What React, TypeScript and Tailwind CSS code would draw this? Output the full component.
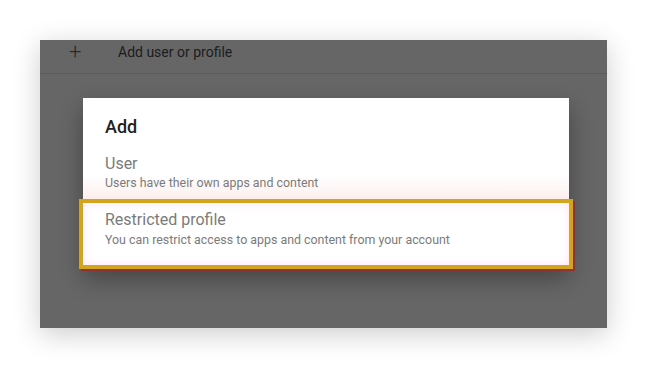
/* Android TV style "Add user or profile" dialog, highlighted option */

const font = "font-['Roboto','Liberation_Sans',sans-serif]";

export default function App() {
  return (
    <div className={`w-[646px] h-[368px] bg-white pt-[40px] pl-[40px] ${font}`}>
      {/* ── dimmed settings panel ── */}
      <div className="w-[567px] h-[288px] bg-[#666666] shadow-[0_6px_26px_rgba(0,0,0,0.2)] flex flex-col">
        <div className="h-[34px] flex items-start pt-[2px] border-b border-[#5b5b5b]">
          <span className="w-[78px] pl-[29px] text-[22px] leading-[20px] font-light text-[#2a2a2a]">+</span>
          <span className="text-[14px] leading-[20px] text-[#1c1c1c]">Add user or profile</span>
        </div>

        {/* ── dialog ── */}
        <div className="ml-[43px] mt-[24px] w-[486px] bg-white pt-[16px] shadow-[0_10px_22px_rgba(0,0,0,0.32)]">
          <div className="px-[22px] text-[18px] leading-[26px] font-medium text-[#1f1f1f]">Add</div>

          <div className="px-[22px] pt-[14px] pb-[8px] bg-gradient-to-b from-white from-60% to-[#fdeeee]">
            <div className="text-[16px] leading-[20px] text-[#7b7b7b]">User</div>
            <div className="text-[12.4px] leading-[17px] text-[#7b7b7b]">Users have their own apps and content</div>
          </div>

          <div className="-mx-[4px] border-[4px] border-[#d3a51c] bg-white shadow-[2px_2px_0_#8e3232,inset_0_0_8px_rgba(255,200,240,0.5)] pl-[22px] pt-[6px] pb-[17px]">
            <div className="text-[16px] leading-[22px] text-[#7b7b7b]">Restricted profile</div>
            <div className="text-[12.4px] leading-[17px] text-[#7b7b7b]">
              You can restrict access to apps and content from your account
            </div>
          </div>
        </div>
      </div>
    </div>
  );
}
